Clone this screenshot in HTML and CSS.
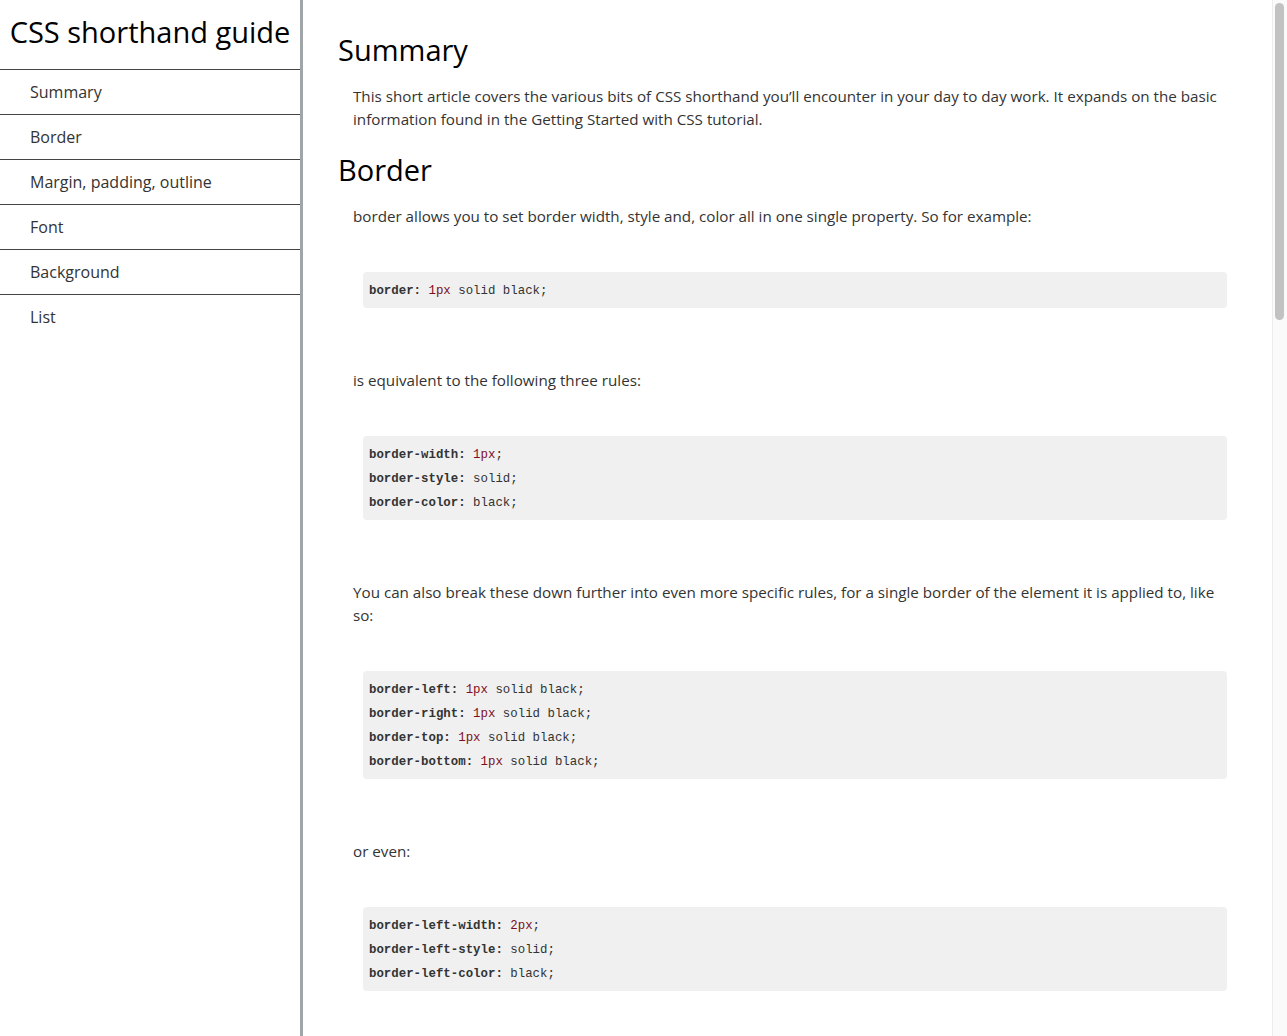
FILE: index.html
```html
<!DOCTYPE html>
<html lang="en">
<head>
<meta charset="utf-8">
<title>CSS shorthand guide</title>
<link rel="stylesheet" href="styles.css">
</head>
<body>
<div class="layout">
  <aside class="sidebar">
    <h1 class="site-title">CSS shorthand guide</h1>
    <nav class="nav">
      <a class="nav-item" href="#summary">Summary</a>
      <a class="nav-item" href="#border">Border</a>
      <a class="nav-item" href="#margin">Margin, padding, outline</a>
      <a class="nav-item" href="#font">Font</a>
      <a class="nav-item" href="#background">Background</a>
      <a class="nav-item" href="#list">List</a>
    </nav>
  </aside>
  <main class="main">
    <section class="section" id="summary">
      <h2 class="section-title">Summary</h2>
      <p class="text">This short article covers the various bits of CSS shorthand you’ll encounter in your day to day work. It expands on the basic information found in the Getting Started with CSS tutorial.</p>
    </section>
    <section class="section" id="border">
      <h2 class="section-title">Border</h2>
      <p class="text">border allows you to set border width, style and, color all in one single property. So for example:</p>
      <pre class="code"><span class="prop">border:</span> <span class="num">1px</span> solid black;</pre>
      <p class="text">is equivalent to the following three rules:</p>
      <pre class="code"><span class="prop">border-width:</span> <span class="num">1px</span>;
<span class="prop">border-style:</span> solid;
<span class="prop">border-color:</span> black;</pre>
      <p class="text">You can also break these down further into even more specific rules, for a single border of the element it is applied to, like so:</p>
      <pre class="code"><span class="prop">border-left:</span> <span class="num">1px</span> solid black;
<span class="prop">border-right:</span> <span class="num">1px</span> solid black;
<span class="prop">border-top:</span> <span class="num">1px</span> solid black;
<span class="prop">border-bottom:</span> <span class="num">1px</span> solid black;</pre>
      <p class="text">or even:</p>
      <pre class="code code-last"><span class="prop">border-left-width:</span> <span class="num">2px</span>;
<span class="prop">border-left-style:</span> solid;
<span class="prop">border-left-color:</span> black;</pre>
    </section>
  </main>
  <div class="scrollbar" aria-hidden="true">
    <div class="scrollbar-thumb"></div>
  </div>
</div>
</body>
</html>
```
FILE: styles.css
```css
html, body {
  margin: 0;
  padding: 0;
  height: 100%;
}

body {
  font-family: "Open Sans", "Liberation Sans", sans-serif;
  color: #333;
  background: #fff;
}

.layout {
  display: flex;
  height: 100vh;
  overflow: hidden;
}

.sidebar {
  width: 300px;
  flex: none;
  border-right: 3px solid #a0a5a8;
  background: #fff;
}

.site-title {
  margin: 0;
  height: 69px;
  display: flex;
  align-items: center;
  justify-content: center;
  font-size: 29px;
  font-weight: 400;
  color: #000;
  padding-bottom: 6px;
  box-sizing: border-box;
}

.nav {
  display: flex;
  flex-direction: column;
}

.nav-item {
  display: block;
  height: 44px;
  line-height: 44px;
  border-top: 1px solid #444;
  padding-left: 30px;
  font-size: 16px;
  color: #333;
  text-decoration: none;
}

.main {
  flex: 1;
  min-width: 0;
  overflow: hidden;
  padding: 11px 45px 0 35px;
}

.section-title {
  margin: 22px 0 0;
  font-size: 29px;
  line-height: 34px;
  font-weight: 400;
  color: #000;
}

.text {
  margin: 18px 0 0 15px;
  font-size: 15.2px;
  line-height: 23px;
}

.code {
  margin: 44px 0 61px 25px;
  padding: 7px 6px 5px;
  background: #f0f0f0;
  border-radius: 4px;
  font-family: "Liberation Mono", "Courier New", monospace;
  font-size: 12.4px;
  line-height: 24px;
  color: #333;
  white-space: pre;
}

.code-last {
  margin-bottom: 0;
}

.prop {
  font-weight: 700;
}

.num {
  color: #7d0f1c;
}

.scrollbar {
  width: 15px;
  flex: none;
  background: #fafafa;
  border-left: 1px solid #ededed;
  box-sizing: border-box;
  padding: 3px 3px 0 2px;
}

.scrollbar-thumb {
  height: 317px;
  background: #c2c2c2;
  border-radius: 5px;
}
```
